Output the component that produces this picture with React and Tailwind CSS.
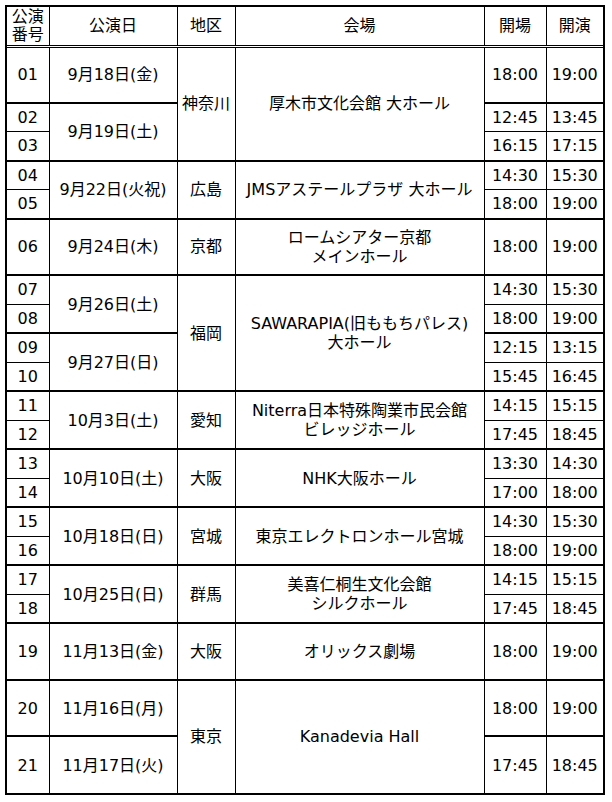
import React from "react";

const rows = [
  { n: "01", h: 2, date: ["9月18日(金)", 1], region: ["神奈川", 3], venue: ["厚木市文化会館 大ホール", 3], o: "18:00", s: "19:00", t: true },
  { n: "02", h: 1, date: ["9月19日(土)", 2], o: "12:45", s: "13:45" },
  { n: "03", h: 1, o: "16:15", s: "17:15", t: true },
  { n: "04", h: 1, date: ["9月22日(火祝)", 2], region: ["広島", 2], venue: ["JMSアステールプラザ 大ホール", 2], o: "14:30", s: "15:30" },
  { n: "05", h: 1, o: "18:00", s: "19:00", t: true },
  { n: "06", h: 2, date: ["9月24日(木)", 1], region: ["京都", 1], venue: ["ロームシアター京都\nメインホール", 1], o: "18:00", s: "19:00", t: true },
  { n: "07", h: 1, date: ["9月26日(土)", 2], region: ["福岡", 4], venue: ["SAWARAPIA(旧ももちパレス)\n大ホール", 4], o: "14:30", s: "15:30" },
  { n: "08", h: 1, o: "18:00", s: "19:00", t: true },
  { n: "09", h: 1, date: ["9月27日(日)", 2], o: "12:15", s: "13:15" },
  { n: "10", h: 1, o: "15:45", s: "16:45", t: true },
  { n: "11", h: 1, date: ["10月3日(土)", 2], region: ["愛知", 2], venue: ["Niterra日本特殊陶業市民会館\nビレッジホール", 2], o: "14:15", s: "15:15" },
  { n: "12", h: 1, o: "17:45", s: "18:45", t: true },
  { n: "13", h: 1, date: ["10月10日(土)", 2], region: ["大阪", 2], venue: ["NHK大阪ホール", 2], o: "13:30", s: "14:30" },
  { n: "14", h: 1, o: "17:00", s: "18:00", t: true },
  { n: "15", h: 1, date: ["10月18日(日)", 2], region: ["宮城", 2], venue: ["東京エレクトロンホール宮城", 2], o: "14:30", s: "15:30" },
  { n: "16", h: 1, o: "18:00", s: "19:00", t: true },
  { n: "17", h: 1, date: ["10月25日(日)", 2], region: ["群馬", 2], venue: ["美喜仁桐生文化会館\nシルクホール", 2], o: "14:15", s: "15:15" },
  { n: "18", h: 1, o: "17:45", s: "18:45", t: true },
  { n: "19", h: 2, date: ["11月13日(金)", 1], region: ["大阪", 1], venue: ["オリックス劇場", 1], o: "18:00", s: "19:00", t: true },
  { n: "20", h: 2, date: ["11月16日(月)", 1], region: ["東京", 2], venue: ["Kanadevia Hall", 2], o: "18:00", s: "19:00", t: true },
  { n: "21", h: 2, date: ["11月17日(火)", 1], o: "17:45", s: "18:45", t: true },
];

const cell = "border border-black p-0 text-center align-middle";
const thick = "border border-black border-b-2 p-0 text-center align-middle";

function Lines({ text }) {
  const parts = text.split("\n");
  return parts.map((p, i) => (
    <div key={i} className="whitespace-nowrap">
      {p}
    </div>
  ));
}

export default function App() {
  return (
    <div className="bg-white w-[612px] h-[802px] pt-[5px] pl-[5px] font-['DejaVu_Sans','Noto_Sans_CJK_JP',sans-serif] text-[16px] text-black">
      <div className="w-[600px] border-2 border-black">
        <table className="w-full table-fixed border-collapse border-hidden leading-[19px]">
          <colgroup>
            <col className="w-[42px]" />
            <col className="w-[128px]" />
            <col className="w-[58px]" />
            <col className="w-[249px]" />
            <col className="w-[62px]" />
            <col />
          </colgroup>
          <thead>
            <tr className="h-[39px]">
              {["公演\n番号", "公演日", "地区", "会場", "開場", "開演"].map((h, i) => (
                <th
                  key={i}
                  className="border border-black border-b-[3px] [border-bottom-style:double] p-0 text-center align-middle font-normal leading-[18px]"
                >
                  <Lines text={h} />
                </th>
              ))}
            </tr>
          </thead>
          <tbody>
            {rows.map((r) => (
              <tr key={r.n} className={r.h === 2 ? "h-[56.6px]" : "h-[29px]"}>
                <td className={r.t ? thick : cell}>{r.n}</td>
                {r.date && (
                  <td rowSpan={r.date[1]} className={thick}>
                    {r.date[0]}
                  </td>
                )}
                {r.region && (
                  <td rowSpan={r.region[1]} className={thick}>
                    {r.region[0]}
                  </td>
                )}
                {r.venue && (
                  <td rowSpan={r.venue[1]} className={thick}>
                    <Lines text={r.venue[0]} />
                  </td>
                )}
                <td className={r.t ? thick : cell}>{r.o}</td>
                <td className={r.t ? thick : cell}>{r.s}</td>
              </tr>
            ))}
          </tbody>
        </table>
      </div>
    </div>
  );
}
